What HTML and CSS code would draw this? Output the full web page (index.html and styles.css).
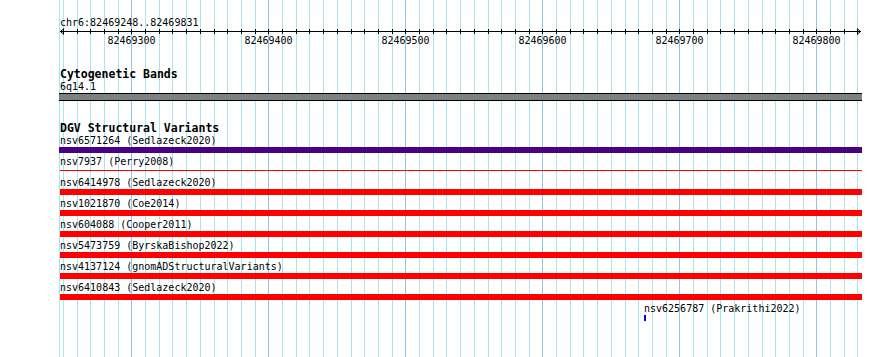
FILE: index.html
```html
<!DOCTYPE html>
<html>
  <head>
    <title>chr6:82469248..82469831</title>
    <link rel="stylesheet" href="styles.css">
  </head>
  <body>
    <div class="browser">
      <!-- gridlines every 10bp, darker every 100bp -->
      <svg class="grid" width="890" height="357">
        <path class="minor" d="M59.5 0V357 M63.5 0V357 M77.5 0V357 M90.5 0V357 M104.5 0V357 M118.5 0V357
          M145.5 0V357 M159.5 0V357 M172.5 0V357 M186.5 0V357 M200.5 0V357 M214.5 0V357 M227.5 0V357 M241.5 0V357 M255.5 0V357
          M282.5 0V357 M296.5 0V357 M309.5 0V357 M323.5 0V357 M337.5 0V357 M351.5 0V357 M364.5 0V357 M378.5 0V357 M392.5 0V357
          M419.5 0V357 M433.5 0V357 M446.5 0V357 M460.5 0V357 M474.5 0V357 M488.5 0V357 M501.5 0V357 M515.5 0V357 M529.5 0V357
          M556.5 0V357 M570.5 0V357 M583.5 0V357 M597.5 0V357 M611.5 0V357 M625.5 0V357 M638.5 0V357 M652.5 0V357 M666.5 0V357
          M693.5 0V357 M707.5 0V357 M720.5 0V357 M734.5 0V357 M748.5 0V357 M762.5 0V357 M775.5 0V357 M789.5 0V357 M803.5 0V357
          M830.5 0V357 M844.5 0V357 M857.5 0V357"/>
        <path class="major" d="M131.5 0V357 M268.5 0V357 M405.5 0V357 M542.5 0V357 M679.5 0V357 M816.5 0V357"/>
      </svg>

      <div class="view">
        <div class="location">chr6:82469248..82469831</div>

        <svg class="axis" width="890" height="7">
          <path d="M60 3.5H861"/>
          <path d="M63.5 1V6 M77.5 1V6 M90.5 1V6 M104.5 1V6 M118.5 1V6 M131.5 1V6 M145.5 1V6 M159.5 1V6 M172.5 1V6 M186.5 1V6
            M200.5 1V6 M214.5 1V6 M227.5 1V6 M241.5 1V6 M255.5 1V6 M268.5 1V6 M282.5 1V6 M296.5 1V6 M309.5 1V6 M323.5 1V6
            M337.5 1V6 M351.5 1V6 M364.5 1V6 M378.5 1V6 M392.5 1V6 M405.5 1V6 M419.5 1V6 M433.5 1V6 M446.5 1V6 M460.5 1V6
            M474.5 1V6 M488.5 1V6 M501.5 1V6 M515.5 1V6 M529.5 1V6 M542.5 1V6 M556.5 1V6 M570.5 1V6 M583.5 1V6 M597.5 1V6
            M611.5 1V6 M625.5 1V6 M638.5 1V6 M652.5 1V6 M666.5 1V6 M679.5 1V6 M693.5 1V6 M707.5 1V6 M720.5 1V6 M734.5 1V6
            M748.5 1V6 M762.5 1V6 M775.5 1V6 M789.5 1V6 M803.5 1V6 M816.5 1V6 M830.5 1V6 M844.5 1V6 M857.5 1V6"/>
          <path d="M64 0.5L60.5 3.5L64 6.5 M857 0.5L860.5 3.5L857 6.5"/>
        </svg>

        <div class="scale">
          <span>82469300</span>
          <span>82469400</span>
          <span>82469500</span>
          <span>82469600</span>
          <span>82469700</span>
          <span>82469800</span>
        </div>

        <section class="track">
          <h2>Cytogenetic Bands</h2>
          <div class="label">6q14.1</div>
          <div class="band"></div>
        </section>

        <section class="track">
          <h2>DGV Structural Variants</h2>
          <div class="feature">
            <div class="label">nsv6571264 (Sedlazeck2020)</div>
            <div class="bar gain"></div>
          </div>
          <div class="feature">
            <div class="label">nsv7937 (Perry2008)</div>
            <div class="bar thin"></div>
          </div>
          <div class="feature">
            <div class="label">nsv6414978 (Sedlazeck2020)</div>
            <div class="bar loss"></div>
          </div>
          <div class="feature">
            <div class="label">nsv1021870 (Coe2014)</div>
            <div class="bar loss"></div>
          </div>
          <div class="feature">
            <div class="label">nsv604088 (Cooper2011)</div>
            <div class="bar loss"></div>
          </div>
          <div class="feature">
            <div class="label">nsv5473759 (ByrskaBishop2022)</div>
            <div class="bar loss"></div>
          </div>
          <div class="feature">
            <div class="label">nsv4137124 (gnomADStructuralVariants)</div>
            <div class="bar loss"></div>
          </div>
          <div class="feature">
            <div class="label">nsv6410843 (Sedlazeck2020)</div>
            <div class="bar loss"></div>
          </div>
          <div class="feature small">
            <div class="label">nsv6256787 (Prakrithi2022)</div>
            <div class="bar ins"></div>
          </div>
        </section>
      </div>
    </div>
  </body>
</html>
```

FILE: styles.css
```css
body {
  margin: 0;
  background-color: #fff;
  color: #000;
  font-family: 'DejaVu Sans Mono', 'Liberation Mono', monospace;
  font-size: 10px;
}

.browser {
  position: relative;
  width: 890px;
  height: 357px;
  overflow: hidden;
}

.grid {
  position: absolute;
  left: 0;
  top: 0;
}

.grid path {
  fill: none;
  stroke-width: 1;
}

.grid .minor {
  stroke: #a8e6ee;
}

.grid .major {
  stroke: #8cc6ec;
}

.view {
  position: relative;
  padding-top: 17px;
}

.location {
  margin-left: 60px;
  height: 11px;
  line-height: 11px;
  white-space: nowrap;
}

.axis {
  display: block;
}

.axis path {
  fill: none;
  stroke: #000;
  stroke-width: 1;
}

.scale {
  display: flex;
  margin-left: 63px;
  height: 12px;
  line-height: 12px;
}

.scale > span {
  flex: 0 0 137px;
  text-align: center;
}

.track {
  margin: 20px 0 0 60px;
}

.track h2 {
  margin: 0;
  font-size: 11.5px;
  font-weight: bold;
  height: 14px;
  line-height: 14px;
}

.label {
  height: 12px;
  line-height: 12px;
  white-space: nowrap;
}

.band {
  margin-left: -1px;
  width: 803px;
  height: 6px;
  background-color: #808080;
  border-top: 1px solid #000;
  border-bottom: 1px solid #000;
}

.feature {
  padding-bottom: 3px;
}

.bar {
  width: 802px;
  height: 6px;
}

.bar.gain {
  margin-left: -1px;
  width: 803px;
  background-color: #4b0082;
}

.bar.loss {
  background-color: #f00;
}

.bar.thin {
  height: 1px;
  margin: 2px 0 3px;
  background-color: #f00;
}

.feature.small {
  margin-left: 584px;
}

.bar.ins {
  width: 2px;
  background-color: #00f;
}
```
